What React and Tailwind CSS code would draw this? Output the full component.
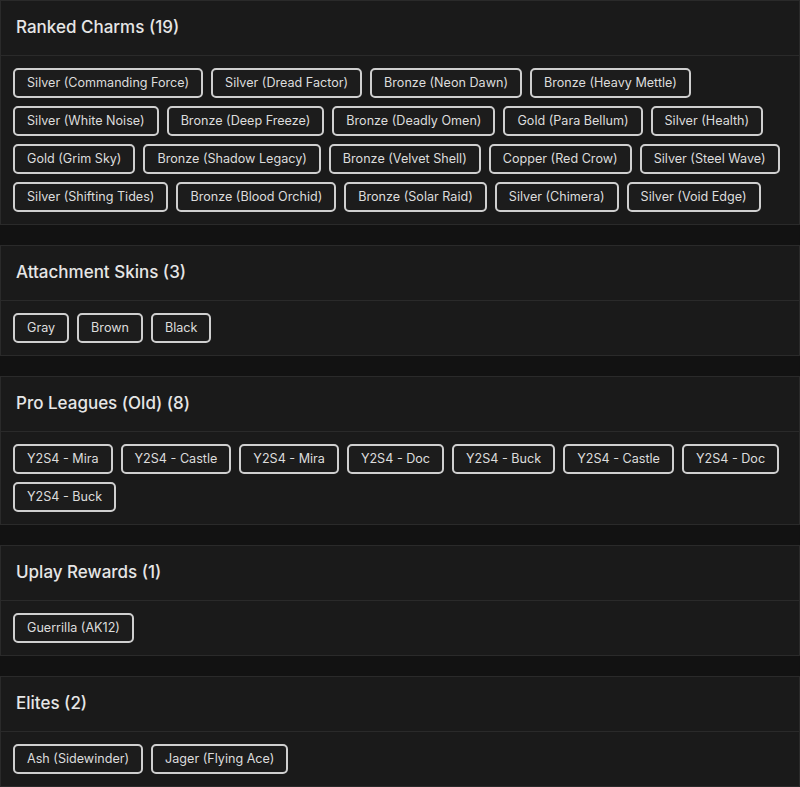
import React from "react";

const sections = [
  {
    title: "Ranked Charms (19)",
    items: [
      "Silver (Commanding Force)",
      "Silver (Dread Factor)",
      "Bronze (Neon Dawn)",
      "Bronze (Heavy Mettle)",
      "Silver (White Noise)",
      "Bronze (Deep Freeze)",
      "Bronze (Deadly Omen)",
      "Gold (Para Bellum)",
      "Silver (Health)",
      "Gold (Grim Sky)",
      "Bronze (Shadow Legacy)",
      "Bronze (Velvet Shell)",
      "Copper (Red Crow)",
      "Silver (Steel Wave)",
      "Silver (Shifting Tides)",
      "Bronze (Blood Orchid)",
      "Bronze (Solar Raid)",
      "Silver (Chimera)",
      "Silver (Void Edge)",
    ],
  },
  { title: "Attachment Skins (3)", items: ["Gray", "Brown", "Black"] },
  {
    title: "Pro Leagues (Old) (8)",
    items: [
      "Y2S4 - Mira",
      "Y2S4 - Castle",
      "Y2S4 - Mira",
      "Y2S4 - Doc",
      "Y2S4 - Buck",
      "Y2S4 - Castle",
      "Y2S4 - Doc",
      "Y2S4 - Buck",
    ],
  },
  { title: "Uplay Rewards (1)", items: ["Guerrilla (AK12)"] },
  { title: "Elites (2)", items: ["Ash (Sidewinder)", "Jager (Flying Ace)"] },
];

function Section({ title, items }) {
  return (
    <div className="bg-[#1a1a1a] border border-[#2a2a2a] mb-5">
      <div className="h-[55px] flex items-center px-[15px] border-b border-[#2a2a2a]">
        <h2 className="text-[17px] font-medium text-[#e6e6e6]">{title}</h2>
      </div>
      <div className="flex flex-wrap gap-x-2 gap-y-2 px-3 py-3">
        {items.map((item, i) => (
          <span
            key={i}
            className="h-[30px] flex items-center px-[12px] border-2 border-[#cfcfcf] rounded-[5px] bg-[#1c1c1c] text-[12.6px] text-[#dcdcdc] whitespace-nowrap"
          >
            {item}
          </span>
        ))}
      </div>
    </div>
  );
}

export default function App() {
  return (
    <div
      className="min-h-screen bg-[#121212] w-[800px]"
      style={{ fontFamily: "Inter, 'Noto Sans', sans-serif" }}
    >
      {sections.map((s) => (
        <Section key={s.title} title={s.title} items={s.items} />
      ))}
    </div>
  );
}
